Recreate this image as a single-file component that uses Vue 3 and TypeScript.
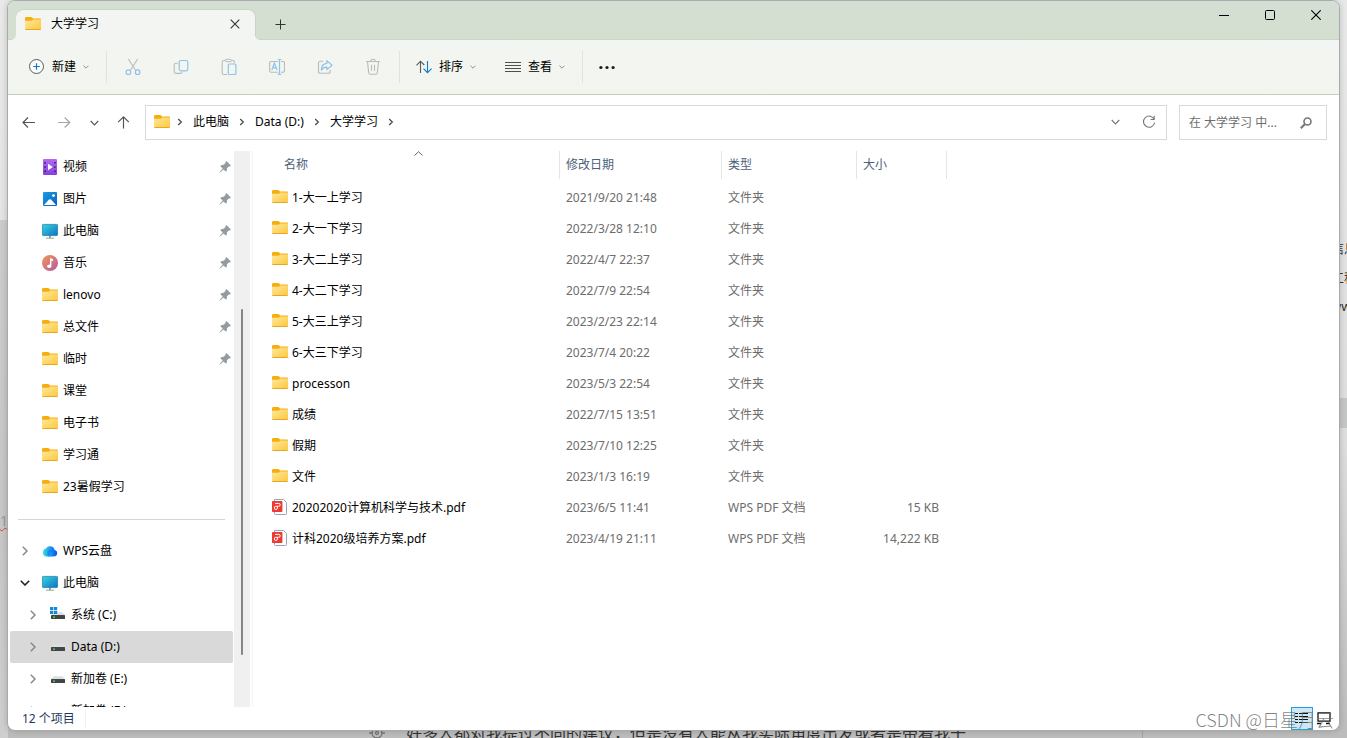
<script setup lang="ts">
import { ref } from 'vue'

type IconName = 'video' | 'picture' | 'pc' | 'music' | 'folder' | 'cloud' | 'system' | 'drive'

interface Place {
  name: string
  icon: IconName
  pinned?: boolean
  depth?: number
  state?: 'open' | 'closed'
}

interface Entry {
  name: string
  date: string
  kind: string
  size: string
}

const quickAccess: Place[] = [
  { name: '视频', icon: 'video', pinned: true },
  { name: '图片', icon: 'picture', pinned: true },
  { name: '此电脑', icon: 'pc', pinned: true },
  { name: '音乐', icon: 'music', pinned: true },
  { name: 'lenovo', icon: 'folder', pinned: true },
  { name: '总文件', icon: 'folder', pinned: true },
  { name: '临时', icon: 'folder', pinned: true },
  { name: '课堂', icon: 'folder' },
  { name: '电子书', icon: 'folder' },
  { name: '学习通', icon: 'folder' },
  { name: '23暑假学习', icon: 'folder' },
]

const tree: Place[] = [
  { name: 'WPS云盘', icon: 'cloud', state: 'closed' },
  { name: '此电脑', icon: 'pc', state: 'open' },
  { name: '系统 (C:)', icon: 'system', depth: 1, state: 'closed' },
  { name: 'Data (D:)', icon: 'drive', depth: 1, state: 'closed' },
  { name: '新加卷 (E:)', icon: 'drive', depth: 1, state: 'closed' },
  { name: '新加卷 (F:)', icon: 'drive', depth: 1, state: 'closed' },
]

const groups: Place[][] = [quickAccess, tree]
const selected = ref('Data (D:)')
const scroll = { top: 28.4, size: 62.3 }

const crumbs = ['此电脑', 'Data (D:)', '大学学习']

const entries: Entry[] = [
  { name: '1-大一上学习', date: '2021/9/20 21:48', kind: '文件夹', size: '' },
  { name: '2-大一下学习', date: '2022/3/28 12:10', kind: '文件夹', size: '' },
  { name: '3-大二上学习', date: '2022/4/7 22:37', kind: '文件夹', size: '' },
  { name: '4-大二下学习', date: '2022/7/9 22:54', kind: '文件夹', size: '' },
  { name: '5-大三上学习', date: '2023/2/23 22:14', kind: '文件夹', size: '' },
  { name: '6-大三下学习', date: '2023/7/4 20:22', kind: '文件夹', size: '' },
  { name: 'processon', date: '2023/5/3 22:54', kind: '文件夹', size: '' },
  { name: '成绩', date: '2022/7/15 13:51', kind: '文件夹', size: '' },
  { name: '假期', date: '2023/7/10 12:25', kind: '文件夹', size: '' },
  { name: '文件', date: '2023/1/3 16:19', kind: '文件夹', size: '' },
  { name: '20202020计算机科学与技术.pdf', date: '2023/6/5 11:41', kind: 'WPS PDF 文档', size: '15 KB' },
  { name: '计科2020级培养方案.pdf', date: '2023/4/19 21:11', kind: 'WPS PDF 文档', size: '14,222 KB' },
]
</script>

<template>
  <div class="desktop">
    <svg class="defs" aria-hidden="true">
      <defs>
        <linearGradient id="g-folder" x1="0" y1="0" x2="1" y2="1">
          <stop offset="0" stop-color="#ffe8a0" /><stop offset="1" stop-color="#fcc83c" />
        </linearGradient>
        <linearGradient id="g-pc" x1="0" y1="0" x2="1" y2="1">
          <stop offset="0" stop-color="#34d6dc" /><stop offset="1" stop-color="#0f72c4" />
        </linearGradient>
        <linearGradient id="g-pic" x1="0" y1="0" x2="1" y2="1">
          <stop offset="0" stop-color="#1a9be6" /><stop offset="1" stop-color="#0b62b8" />
        </linearGradient>
        <linearGradient id="g-vid" x1="0" y1="0" x2="0" y2="1">
          <stop offset="0" stop-color="#b36af0" /><stop offset="1" stop-color="#8340dc" />
        </linearGradient>
        <linearGradient id="g-mus" x1="0" y1="0" x2="1" y2="1">
          <stop offset="0" stop-color="#f09a50" /><stop offset="1" stop-color="#b558a8" />
        </linearGradient>
        <linearGradient id="g-cloud" x1="0" y1="0" x2="1" y2="0">
          <stop offset="0" stop-color="#2fe0d0" /><stop offset="0.5" stop-color="#1a9cf8" /><stop offset="1" stop-color="#0e50e0" />
        </linearGradient>
        <symbol id="i-folder" viewBox="0 0 16 16">
          <path d="M0 2.4Q0 1 1.4 1H6Q6.8 1 7.2 1.6L8 2.5H15Q16 2.5 16 3.5V6H0Z" fill="#f6ae0c" />
          <path d="M0 4.8H6.6L8.4 3.4H16V12.6Q16 13.8 14.8 13.8H1.2Q0 13.8 0 12.6Z" fill="url(#g-folder)" />
          <path d="M.4 13.5H15.6" stroke="#e8a722" stroke-width="1" />
        </symbol>
        <symbol id="i-video" viewBox="0 0 16 16">
          <rect x="1" y="0" width="14" height="16" rx="1" fill="url(#g-vid)" />
          <path d="M2.3 3h1.6v1.6H2.3zM2.3 7.2h1.6v1.6H2.3zM2.3 11.4h1.6V13H2.3zM12.1 3h1.6v1.6h-1.6zM12.1 7.2h1.6v1.6h-1.6zM12.1 11.4h1.6V13h-1.6z" fill="#3d1b73" />
          <path d="M6 4.8 10.8 8 6 11.2Z" fill="#fff" />
        </symbol>
        <symbol id="i-picture" viewBox="0 0 16 16">
          <rect x="1" y="1" width="14" height="14" rx="1" fill="url(#g-pic)" />
          <path d="M2 14 7 8.6Q8 7.8 9 8.6L14 14Z" fill="#fff" />
          <circle cx="11.5" cy="4.6" r="1.4" fill="#fff" />
        </symbol>
        <symbol id="i-pc" viewBox="0 0 16 16">
          <path d="M7 12h2v3H7z" fill="#98a2a8" />
          <path d="M4 15.2h8" stroke="#98a2a8" stroke-width="1" />
          <rect x=".4" y="1.4" width="15.2" height="11.2" rx=".8" fill="url(#g-pc)" stroke="#1875a8" stroke-width=".7" />
        </symbol>
        <symbol id="i-music" viewBox="0 0 16 16">
          <circle cx="8" cy="8" r="8" fill="url(#g-mus)" />
          <path d="M8.2 3 11 4.2V6.3L9.2 5.6V11.2" fill="#fff" />
          <path d="M8.6 3.5V11" stroke="#fff" stroke-width="1.2" />
          <ellipse cx="7.2" cy="11.2" rx="2.1" ry="1.8" fill="#fff" />
        </symbol>
        <symbol id="i-cloud" viewBox="0 0 16 16">
          <path d="M4.4 13.6H11.8A3.4 3.4 0 0 0 12.6 6.9 4.7 4.7 0 0 0 4 5.6 4.1 4.1 0 0 0 4.4 13.6Z" fill="url(#g-cloud)" />
          <path d="M5 10.2A3.4 3.4 0 0 1 11 8 3.4 3.4 0 0 0 8.4 13.6H6Z" fill="#1668f0" opacity=".45" />
        </symbol>
        <symbol id="i-drive" viewBox="0 0 16 16">
          <path d="M3.6 5.2H12.4L15 8.2H1Z" fill="#dcdfe1" />
          <rect x="1" y="8" width="14" height="4" rx=".5" fill="#424648" />
          <rect x="3" y="9.5" width="2" height="1.3" fill="#45e23c" />
        </symbol>
        <symbol id="i-system" viewBox="0 0 16 16">
          <path d="M6 5.2H12.4L15 8.2H1Z" fill="#dcdfe1" />
          <rect x="1" y="8" width="14" height="4" rx=".5" fill="#424648" />
          <rect x="3" y="9.5" width="2" height="1.3" fill="#45e23c" />
          <path d="M0 0h3.3v3.1H0zM3.9 0h3.3v3.1H3.9zM0 3.8h3.3v3.1H0zM3.9 3.8h3.3v3.1H3.9z" fill="#1787d8" />
        </symbol>
        <symbol id="i-pdf" viewBox="0 0 16 16">
          <path d="M2.5 .5H11.6L14.5 3.6V14.5Q14.5 15.5 13.5 15.5H3.5Q2.5 15.5 2.5 14.5Z" fill="#fff" stroke="#98a3b5" stroke-width="1" />
          <rect x="0" y="2" width="10.4" height="11" rx=".8" fill="#ee3b32" />
          <path d="M3.2 4.4H6.8Q8.2 4.4 8.2 5.8T6.8 7.3H3.8Q2.3 7.3 2.3 8.9T3.8 10.5Q5.4 10.5 5.4 9V7.3" fill="none" stroke="#fff" stroke-width="1" />
        </symbol>
        <symbol id="i-pin" viewBox="0 0 14 14">
          <path d="M8.4 1.1 12.9 5.6 11.7 6.6 10.3 6.8 9 8.5 8.7 10.9 7.7 11.4 5.4 9.6 2.2 12.6 1.6 12.7 1.7 12 4.7 8.4 2.4 6.2 3 5.2 5.4 4.8 7.2 3.5 7.4 2.2Z" fill="#929ca4" />
        </symbol>
        <symbol id="i-down" viewBox="0 0 10 6">
          <path d="M.8 .8 5 5 9.2 .8" fill="none" stroke="currentColor" stroke-width="1.3" />
        </symbol>
        <symbol id="i-right" viewBox="0 0 6 10">
          <path d="M.8 .8 5 5 .8 9.2" fill="none" stroke="currentColor" stroke-width="1.5" />
        </symbol>
      </defs>
    </svg>

    <div class="behind" aria-hidden="true">
      <i class="shade"></i>
      <i class="band"></i>
      <span class="left-note">1</span>
      <div class="right-notes"><span>信息</span><span>工程</span><span>www</span></div>
      <div class="bottom-note">
        <svg width="18" height="18" viewBox="0 0 18 18"><g fill="none" stroke="#777" stroke-width="1.3"><circle cx="9" cy="9" r="5" /><circle cx="9" cy="9" r="1.5" /><path d="M9 1v4M9 13v4M1 9h4M13 9h4" /></g></svg>
        <span>好多人都对我提过不同的建议，但是没有人能从我实际角度出发或者是带着我干</span>
      </div>
      <i class="rule"></i>
    </div>

    <main class="window">
      <header class="titlebar">
        <div class="tab">
          <svg class="ico"><use href="#i-folder" /></svg>
          <span class="tab-name">大学学习</span>
          <button class="tab-close" aria-label="关闭标签页">
            <svg width="10" height="10" viewBox="0 0 10 10"><path d="M.7 .7 9.3 9.3M9.3 .7 .7 9.3" stroke="#333" stroke-width="1.1" /></svg>
          </button>
        </div>
        <button class="tab-add" aria-label="新标签页">
          <svg width="11" height="11" viewBox="0 0 11 11"><path d="M5.5 .5v10M.5 5.5h10" stroke="#333" /></svg>
        </button>
        <div class="controls">
          <button aria-label="最小化"><svg width="10" height="10" viewBox="0 0 10 10"><path d="M0 5.5h10" stroke="#000" /></svg></button>
          <button aria-label="最大化"><svg width="10" height="10" viewBox="0 0 10 10"><rect x=".5" y=".5" width="9" height="9" rx="1" fill="none" stroke="#000" /></svg></button>
          <button aria-label="关闭"><svg width="10" height="10" viewBox="0 0 10 10"><path d="M.3 .3 9.7 9.7M9.7 .3 .3 9.7" stroke="#000" stroke-width="1.1" /></svg></button>
        </div>
      </header>

      <div class="toolbar">
        <button class="command">
          <svg class="ico" viewBox="0 0 16 16"><circle cx="7.5" cy="7.5" r="7" fill="#fbfcfb" stroke="#565b5e" /><path d="M7.5 4.2v6.6M4.2 7.5h6.6" stroke="#0a78d4" stroke-width="1.2" /></svg>
          <span>新建</span>
          <svg class="caret"><use href="#i-down" /></svg>
        </button>
        <i class="split"></i>
        <div class="tools">
          <button disabled aria-label="剪切"><svg viewBox="0 0 16 18"><path d="M3.4 1 11 13M12.6 1 5 13" fill="none" stroke="#b9bcba" stroke-width="1.1" /><g fill="none" stroke="#8ec3ea" stroke-width="1.2"><circle cx="3.4" cy="14.2" r="2.3" /><circle cx="12.6" cy="14.2" r="2.3" /></g></svg></button>
          <button disabled aria-label="复制"><svg viewBox="0 0 16 18"><path d="M4.8 5.2H3Q1.2 5.2 1.2 7V13.5Q1.2 15.4 3 15.4H7.4Q9 15.4 9.2 13.7" fill="none" stroke="#b9bcba" stroke-width="1.1" /><rect x="6.2" y="2.5" width="8.6" height="10.4" rx="1.8" fill="none" stroke="#8ec3ea" stroke-width="1.2" /></svg></button>
          <button disabled aria-label="粘贴"><svg viewBox="0 0 16 18"><path d="M4.4 2.5H2.8Q1.2 2.5 1.2 4V15Q1.2 16.5 2.8 16.5H6M10.4 2.5H12Q13.4 2.5 13.4 4V5" fill="none" stroke="#b9bcba" stroke-width="1.1" /><rect x="4.2" y="1.3" width="6.2" height="2.4" rx="1.1" fill="none" stroke="#b9bcba" /><rect x="7.3" y="6" width="7.6" height="10.5" rx="1.1" fill="none" stroke="#8ec3ea" stroke-width="1.2" /></svg></button>
          <button disabled aria-label="重命名"><svg viewBox="0 0 16 18"><path d="M9 3.5H2.2Q.6 3.5 .6 5V12.5Q.6 14.2 2.2 14.2H9M12 3.5H14Q15.5 3.5 15.5 5V12.5Q15.5 14.2 14 14.2H12" fill="none" stroke="#b9bcba" stroke-width="1.1" /><path d="M2.7 12 5.4 5.2 8 12M3.6 9.9H7.2M8.8 1.5H12.2M10.5 1.5V16.3M8.8 16.3H12.2" fill="none" stroke="#8ec3ea" stroke-width="1.2" /></svg></button>
          <button disabled aria-label="共享"><svg viewBox="0 0 16 18"><path d="M6.4 3.2H3.5Q1.5 3.2 1.5 5V13.2Q1.5 15.3 3.5 15.3H11.3Q13.3 15.3 13.3 13.2V12" fill="none" stroke="#b9bcba" stroke-width="1.1" /><path d="M9.9 2.6 15 7.2 9.9 11.6V9.1Q6.2 9 4.3 12.1 4.5 5.8 9.9 5.3Z" fill="none" stroke="#8ec3ea" stroke-width="1.2" stroke-linejoin="round" /></svg></button>
          <button disabled aria-label="删除"><svg viewBox="0 0 16 18"><path d="M1 3.5H15M5.7 3.3Q5.7 1.3 8 1.3T10.3 3.3M2.5 3.7 3.7 14.7Q3.9 16.3 5.2 16.3H10.8Q12.1 16.3 12.3 14.7L13.5 3.7M6.5 6.8V12.8M9.5 6.8V12.8" fill="none" stroke="#b9bcba" stroke-width="1.1" /></svg></button>
        </div>
        <i class="split"></i>
        <button class="command">
          <svg class="ico" viewBox="0 0 16 16"><path d="M4.5 14V2.4M.5 6.3 4.5 2.2 8.3 6" fill="none" stroke="#555a58" stroke-width="1.1" /><path d="M11.5 2V13.6M7.5 9.6 11.5 13.7 15.6 9.6" fill="none" stroke="#1279cf" stroke-width="1.1" /></svg>
          <span>排序</span>
          <svg class="caret"><use href="#i-down" /></svg>
        </button>
        <button class="command next">
          <svg class="ico" viewBox="0 0 16 16"><path d="M0 3.5h16M0 6.5h16M0 9.5h16M0 12.5h16" stroke="#4b504e" /></svg>
          <span>查看</span>
          <svg class="caret"><use href="#i-down" /></svg>
        </button>
        <i class="split"></i>
        <button class="command" aria-label="更多">
          <svg class="ico" viewBox="0 0 16 16"><g fill="#1b1b1b"><circle cx="1.9" cy="8.5" r="1.6" /><circle cx="8" cy="8.5" r="1.6" /><circle cx="14.1" cy="8.5" r="1.6" /></g></svg>
        </button>
      </div>

      <div class="location">
        <nav class="history" aria-label="导航">
          <button aria-label="后退"><svg class="ico" viewBox="0 0 16 16"><path d="M15 7.5H3M8 2.5 3 7.5 8 12.5" fill="none" stroke="#555" stroke-width="1.2" /></svg></button>
          <button aria-label="前进" disabled><svg class="ico" viewBox="0 0 16 16"><path d="M2 7.5H13.5M8.7 2.5 13.7 7.5 8.7 12.5" fill="none" stroke="#a6a6a6" stroke-width="1.2" /></svg></button>
          <button class="recent" aria-label="最近位置"><svg width="9" height="6"><use href="#i-down" /></svg></button>
          <button class="up" aria-label="向上"><svg class="ico" viewBox="0 0 16 16"><path d="M8.5 13.5V2M3.2 7.2 8.5 1.9 13.8 7.2" fill="none" stroke="#555" stroke-width="1.2" /></svg></button>
        </nav>
        <div class="address">
          <svg class="ico"><use href="#i-folder" /></svg>
          <svg class="sep lead" viewBox="0 0 6 10"><path d="M1.2 1.9 4.3 5 1.2 8.1" fill="none" stroke="#555" stroke-width="1.4" /></svg>
          <template v-for="crumb in crumbs" :key="crumb">
            <button class="crumb">{{ crumb }}</button>
            <svg class="sep" viewBox="0 0 6 10"><path d="M1.2 1.9 4.3 5 1.2 8.1" fill="none" stroke="#555" stroke-width="1.4" /></svg>
          </template>
          <button class="history-toggle" aria-label="以前的位置"><svg width="9" height="6"><use href="#i-down" /></svg></button>
          <button class="refresh" aria-label="刷新"><svg width="14" height="14" viewBox="0 0 14 14"><path d="M12.2 4.4A5.6 5.6 0 1 0 12.6 7.6M12.2 .8V4.5H8.6" fill="none" stroke="#777" stroke-width="1.1" /></svg></button>
        </div>
        <label class="search">
          <input type="text" placeholder="在 大学学习 中..." aria-label="搜索" />
          <svg width="12" height="12" viewBox="0 0 12 12"><circle cx="7.5" cy="4.5" r="3.5" fill="none" stroke="#777" stroke-width="1.6" /><path d="M5 7 .8 11.2" stroke="#777" stroke-width="2" /></svg>
        </label>
      </div>

      <div class="content">
        <nav class="sidebar" aria-label="文件夹">
          <ul v-for="(group, g) in groups" :key="g">
            <li v-for="place in group" :key="place.name">
              <button
                class="place"
                :class="{ nested: place.depth, active: place.name === selected }"
                @click="selected = place.name"
              >
                <span class="twisty">
                  <svg v-if="place.state === 'closed'" width="6" height="10"><use href="#i-right" /></svg>
                  <svg v-if="place.state === 'open'" width="10" height="6" viewBox="0 0 10 6"><path d="M.8 .8 5 5 9.2 .8" fill="none" stroke="#222" stroke-width="1.6" /></svg>
                </span>
                <svg class="ico"><use :href="'#i-' + place.icon" /></svg>
                <span class="place-name">{{ place.name }}</span>
                <svg v-if="place.pinned" class="pin"><use href="#i-pin" /></svg>
              </button>
            </li>
          </ul>
        </nav>
        <div class="scrollbar"><i :style="{ top: scroll.top + '%', height: scroll.size + '%' }"></i></div>

        <section class="files">
          <table>
            <colgroup>
              <col class="c-name" /><col class="c-date" /><col class="c-kind" /><col class="c-size" /><col />
            </colgroup>
            <thead>
              <tr>
                <th class="name-head">
                  <button>名称<svg class="sorted" width="9" height="5" viewBox="0 0 9 5"><path d="M.5 4.5 4.5 .7 8.5 4.5" fill="none" stroke="#666" /></svg></button>
                </th>
                <th><button>修改日期</button></th>
                <th><button>类型</button></th>
                <th><button>大小</button></th>
                <td></td>
              </tr>
            </thead>
            <tbody>
              <tr v-for="entry in entries" :key="entry.name">
                <td class="name">
                  <div>
                    <svg class="ico"><use :href="entry.size ? '#i-pdf' : '#i-folder'" /></svg>
                    <span>{{ entry.name }}</span>
                  </div>
                </td>
                <td>{{ entry.date }}</td>
                <td>{{ entry.kind }}</td>
                <td class="size">{{ entry.size }}</td>
                <td></td>
              </tr>
            </tbody>
          </table>
        </section>
      </div>

      <footer class="status">
        <span class="count">12 个项目</span>
        <div class="views">
          <button class="on" aria-label="详细信息">
            <svg width="14" height="13" viewBox="0 0 14 13"><path d="M0 1.5h3M0 4.5h3M0 7.5h3M0 10.5h3M4 1.5h9M4 4.5h9M4 7.5h9M4 10.5h9" stroke="#111" /></svg>
          </button>
          <button aria-label="大缩略图">
            <svg width="14" height="13" viewBox="0 0 14 13"><path d="M1 .8h12v8.4H1zM0 11.5h4M9 11.5h4" fill="none" stroke="#111" stroke-width="1.3" /></svg>
          </button>
        </div>
        <span class="watermark">CSDN @日星月云</span>
      </footer>
    </main>
  </div>
</template>

<style>
html,
body,
#app {
  height: 100%;
}
body {
  margin: 0;
  overflow: hidden;
}
</style>

<style scoped>
.desktop {
  position: relative;
  box-sizing: border-box;
  height: 100%;
  padding: 0 7px 7px;
  overflow: hidden;
  background: linear-gradient(#e9e9e9, #dedede 60%, #bcbcbc);
  font-family: 'Noto Sans', 'Noto Sans CJK SC', sans-serif;
  font-size: 12px;
  line-height: 18px;
  color: #000;
}
.defs {
  position: absolute;
  width: 0;
  height: 0;
}
button {
  display: flex;
  align-items: center;
  justify-content: center;
  margin: 0;
  padding: 0;
  border: 0;
  background: none;
  color: inherit;
  font: inherit;
}
svg {
  display: block;
  flex: none;
}
.ico {
  width: 16px;
  height: 16px;
}

/* Document behind the window */
.shade {
  position: absolute;
  left: 0;
  top: 220px;
  bottom: 0;
  width: 8px;
  background: linear-gradient(#cccccc, #c6c6c6 60%, #cfcfcf);
}
.band {
  position: absolute;
  right: 0;
  top: 398px;
  width: 8px;
  height: 30px;
  background: #c5c7c7;
}
.left-note {
  position: absolute;
  left: 0;
  top: 512px;
  font-size: 14px;
  color: #999;
  text-decoration: underline wavy #e04040 1px;
}
.right-notes {
  position: absolute;
  left: calc(100% - 16px);
  top: 239px;
  display: grid;
  gap: 11px;
  font-size: 13px;
  color: #333;
  white-space: nowrap;
}
.bottom-note {
  position: absolute;
  left: 368px;
  top: calc(100% - 14px);
  display: flex;
  align-items: center;
  gap: 20px;
  font-size: 16px;
  color: #333;
  white-space: nowrap;
}
.rule {
  position: absolute;
  right: 204px;
  bottom: 0;
  width: 1px;
  height: 8px;
  background: #a2a2a2;
}

.window {
  position: relative;
  box-sizing: border-box;
  display: flex;
  flex-direction: column;
  height: 100%;
  border: 1px solid #a9abaa;
  border-radius: 8px;
  overflow: hidden;
  background: #fff;
  box-shadow: 0 0 6px rgba(0, 0, 0, 0.18);
}

/* Title bar */
.titlebar {
  display: flex;
  align-items: flex-end;
  flex: none;
  height: 39px;
  padding-left: 8px;
  background: linear-gradient(#d4ded4, #d4dfcf);
  box-shadow: inset 0 -1px #c8d5c6;
}
.tab {
  position: relative;
  display: flex;
  align-items: center;
  box-sizing: border-box;
  width: 240px;
  height: 31px;
  padding: 0 15px 2px 9px;
  border: solid #c8d5c6;
  border-width: 1px 1px 0 0;
  border-radius: 8px 8px 0 0;
  background: #f3f5f2;
}
.tab::before,
.tab::after {
  content: '';
  position: absolute;
  bottom: 0;
  width: 4px;
  height: 4px;
}
.tab::before {
  right: 100%;
  background: radial-gradient(circle at 0 0, transparent 3px, #f3f5f2 4px);
}
.tab::after {
  left: 100%;
  background: radial-gradient(circle at 100% 0, transparent 3px, #f3f5f2 4px);
}
.tab-name {
  flex: 1;
  padding-left: 10px;
}
.tab-add {
  width: 48px;
  height: 31px;
}
.controls {
  display: flex;
  align-self: flex-start;
  margin-left: auto;
}
.controls button {
  width: 46px;
  height: 28px;
}

/* Command bar */
.toolbar {
  display: flex;
  align-items: center;
  flex: none;
  height: 54px;
  padding-left: 13px;
  border-bottom: 1px solid #c3cfb9;
  background: linear-gradient(#f3f5f2, #f2f5ee);
}
.command {
  gap: 7px;
  height: 32px;
  padding: 0 8px;
}
.next {
  margin-left: 13px;
}
.caret {
  width: 6px;
  height: 4px;
  color: #777;
}
.split {
  width: 1px;
  height: 32px;
  margin: 0 9px;
  background: #e0e3df;
}
.tools + .split,
.next + .split {
  margin-right: 8px;
}
.tools {
  display: flex;
  gap: 14px;
}
.tools button {
  width: 34px;
  height: 32px;
}
.tools svg {
  width: 16px;
  height: 18px;
}

/* Address row */
.location {
  display: flex;
  align-items: center;
  flex: none;
  padding: 10px 12px 11px 2px;
}
.history {
  display: flex;
  margin-right: 5px;
}
.history button {
  width: 36px;
  height: 32px;
}
.history .recent {
  width: 24px;
  color: #555;
}
.history .up {
  width: 34px;
}
.address,
.search {
  display: flex;
  align-items: center;
  box-sizing: border-box;
  height: 35px;
  border: 1px solid #d9d9d9;
}
.address {
  flex: 1;
  min-width: 0;
  padding: 0 10px 1px 8px;
}
.sep {
  width: 6px;
  height: 10px;
  margin: 0 10px;
}
.lead {
  margin-left: 7px;
}
.history-toggle {
  width: 34px;
  height: 32px;
  margin-left: auto;
  color: #777;
}
.refresh {
  width: 14px;
  height: 32px;
  margin-left: 10px;
}
.search {
  width: 148px;
  margin-left: 12px;
  padding: 0 14px 0 9px;
}
.search input {
  flex: 1;
  min-width: 0;
  padding: 0;
  border: 0;
  outline: 0;
  background: none;
  color: #000;
  font: inherit;
}
.search input::placeholder {
  color: #6d6d6d;
  opacity: 1;
}

/* Body */
.content {
  display: flex;
  flex: 1;
  min-height: 0;
}
.sidebar {
  flex: none;
  box-sizing: border-box;
  width: 226px;
  padding: 0 1px 0 2px;
  overflow: hidden;
}
.sidebar ul {
  margin: 0;
  padding: 0;
  list-style: none;
}
.sidebar ul + ul::before {
  content: '';
  display: block;
  height: 1px;
  margin: 16px 8px 15px;
  background: #d4d4d4;
}
.place {
  width: 100%;
  height: 32px;
  padding: 0 1px 0 8px;
  border-radius: 2px;
}
.nested {
  padding-left: 16px;
}
.active {
  background: #d9d9d9;
}
.twisty {
  display: flex;
  justify-content: center;
  width: 14px;
  margin-right: 10px;
  color: #888;
}
.place-name {
  flex: 1;
  padding-left: 5px;
  text-align: left;
}
.pin {
  width: 14px;
  height: 14px;
}
.scrollbar {
  position: relative;
  flex: none;
  width: 16px;
  background: #f0f0f0;
}
.scrollbar i {
  position: absolute;
  left: 7px;
  width: 2px;
  border-radius: 1px;
  background: #858585;
}
.files {
  flex: 1;
  min-width: 0;
  margin-left: 2px;
  border-left: 1px solid #f3f3f3;
}
table {
  width: 100%;
  table-layout: fixed;
  border-collapse: collapse;
}
.c-name {
  width: 307px;
}
.c-date {
  width: 162px;
}
.c-kind {
  width: 135px;
}
.c-size {
  width: 90px;
}
th,
td {
  height: 31px;
  padding: 0;
  font-weight: normal;
  text-align: left;
  white-space: nowrap;
}
th {
  vertical-align: top;
  color: #4c607a;
}
th button {
  position: relative;
  box-sizing: border-box;
  justify-content: flex-start;
  width: 100%;
  height: 28px;
  padding-left: 6px;
  border-right: 1px solid #e5e5e5;
}
.name-head {
  padding-left: 24px;
}
.name-head button {
  padding-left: 7px;
}
.sorted {
  position: absolute;
  top: 0;
  left: 0;
  right: 0;
  margin: 0 auto;
}
tbody td {
  padding-left: 6px;
  color: #6d6d6d;
}
tbody .name {
  padding-left: 19px;
  color: #000;
}
.name div {
  display: flex;
  align-items: center;
  gap: 4px;
}
.name .ico {
  margin-bottom: 1px;
}
tbody .size {
  padding-right: 8px;
  text-align: right;
}

/* Status bar */
.status {
  position: relative;
  display: flex;
  align-items: center;
  flex: none;
  height: 23px;
  padding: 0 4px 0 14px;
  color: #1e395b;
}
.count {
  padding-right: 10px;
  border-right: 1px solid #f0f0f0;
}
.views {
  display: flex;
  margin-left: auto;
}
.views button {
  box-sizing: border-box;
  width: 22px;
  height: 23px;
}
.views .on {
  border: 1px solid #26a0da;
  background: #cce8f6;
}
.watermark {
  position: absolute;
  right: 5px;
  bottom: 0;
  font-family: 'Noto Sans CJK SC', sans-serif;
  font-size: 18px;
  font-weight: 300;
  line-height: 22px;
  color: rgba(110, 110, 110, 0.85);
  pointer-events: none;
}
</style>
